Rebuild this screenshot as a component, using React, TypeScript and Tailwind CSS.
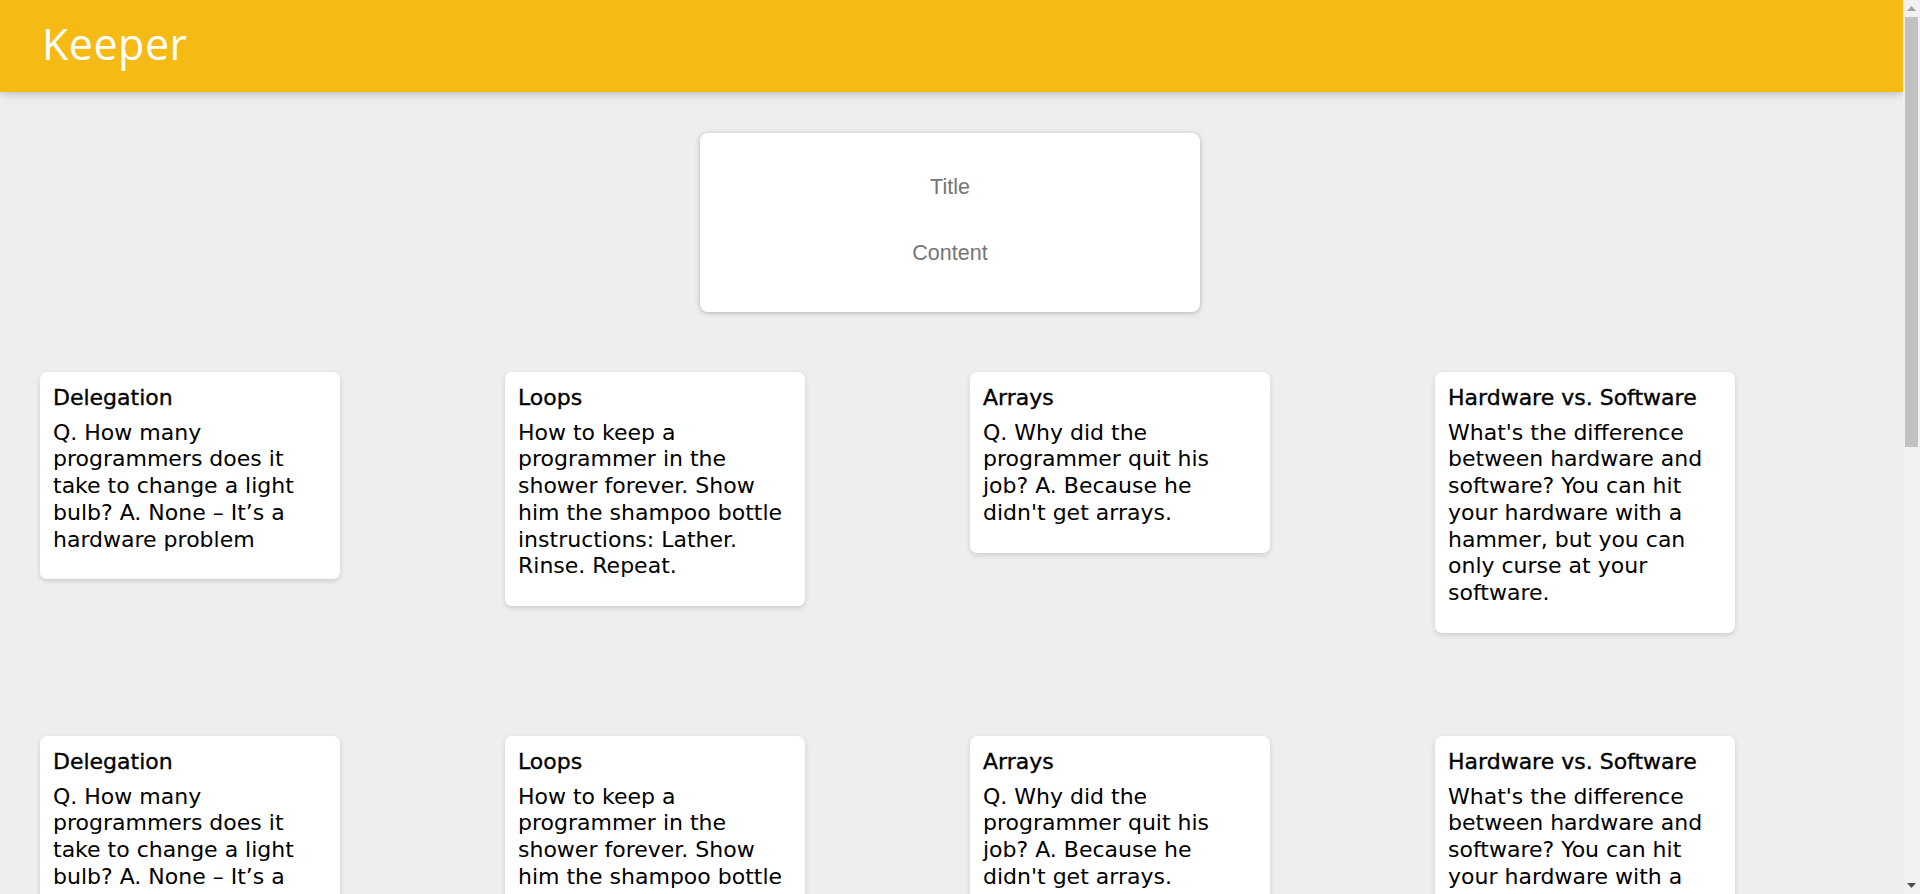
import React from "react";

type Note = { title: string; content: string };

const notes: Note[] = [
  {
    title: "Delegation",
    content:
      "Q. How many programmers does it take to change a light bulb? A. None – It’s a hardware problem",
  },
  {
    title: "Loops",
    content:
      "How to keep a programmer in the shower forever. Show him the shampoo bottle instructions: Lather. Rinse. Repeat.",
  },
  {
    title: "Arrays",
    content:
      "Q. Why did the programmer quit his job? A. Because he didn't get arrays.",
  },
  {
    title: "Hardware vs. Software",
    content:
      "What's the difference between hardware and software? You can hit your hardware with a hammer, but you can only curse at your software.",
  },
];

function Header() {
  return (
    <header className="h-[92px] w-full bg-[#f5ba13] pl-[42px] pt-[22px] shadow-[0_0_10px_0_rgba(0,0,0,0.3)]">
      <h1 className="font-['Open_Sans',sans-serif] text-[43px] font-medium leading-none tracking-[0.5px] text-white">
        Keeper
      </h1>
    </header>
  );
}

function CreateArea() {
  return (
    <div className="flex justify-center pr-[3px] pt-[41px]">
      <form className="flex h-[179px] w-[500px] flex-col rounded-[8px] bg-white px-[15px] pt-[34px] shadow-[0_1px_5px_rgba(138,137,137,0.6)]">
        <input
          name="title"
          placeholder="Title"
          className="h-[40px] w-full bg-transparent text-center font-['Liberation_Sans',Arial,sans-serif] text-[21.5px] text-black outline-none placeholder:text-[#757575]"
        />
        <textarea
          name="content"
          placeholder="Content"
          rows={1}
          className="mt-[26px] h-[40px] w-full resize-none bg-transparent pt-[7px] text-center font-['Liberation_Sans',Arial,sans-serif] text-[21.5px] leading-[26px] text-black outline-none placeholder:text-[#757575]"
        />
      </form>
    </div>
  );
}

function NoteCard({ note }: { note: Note }) {
  return (
    <div className="ml-5 w-[300px] rounded-[7px] bg-white p-[13px] shadow-[0_2px_5px_#ccc]">
      <h1 className="mb-[8px] text-[22px] leading-[26.7px] text-black [-webkit-text-stroke:0.35px_black]">
        {note.title}
      </h1>
      <p className="mb-[13px] text-[22px] leading-[26.7px] text-black">
        {note.content}
      </p>
    </div>
  );
}

// mimics the browser's scrollbar seen in the screenshot
function Scrollbar() {
  return (
    <div className="flex h-screen w-[17px] shrink-0 flex-col bg-[#f1f1f1]">
      <div className="flex h-[17px] items-center justify-center">
        <svg width="9" height="5" viewBox="0 0 9 5">
          <path d="M0 5 L4.5 0 L9 5 Z" fill="#a3a3a3" />
        </svg>
      </div>
      <div className="mx-[2px] h-[430px] bg-[#c1c1c1]" />
      <div className="flex-1" />
      <div className="flex h-[17px] items-center justify-center">
        <svg width="9" height="5" viewBox="0 0 9 5">
          <path d="M0 0 L9 0 L4.5 5 Z" fill="#505050" />
        </svg>
      </div>
    </div>
  );
}

export default function App() {
  const all = [...notes, ...notes];
  return (
    <div className="flex h-screen overflow-hidden bg-[#eeeeee] font-['DejaVu_Sans',sans-serif]">
      <main className="h-screen flex-1 overflow-hidden">
        <Header />
        <CreateArea />
        <div className="grid auto-rows-[364px] grid-cols-[repeat(4,465px)] items-start pb-10 pl-5 pt-[60px]">
          {all.map((n, i) => (
            <NoteCard key={i} note={n} />
          ))}
        </div>
      </main>
      <Scrollbar />
    </div>
  );
}
